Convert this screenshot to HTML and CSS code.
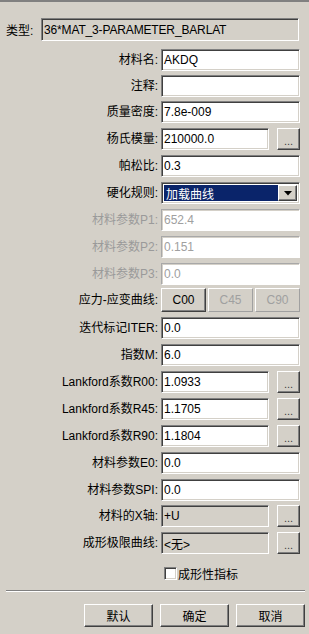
FILE: index.html
```html
<!DOCTYPE html>
<html lang="zh">
<head>
<meta charset="utf-8">
<title>材料属性</title>
<link rel="stylesheet" href="styles.css">
</head>
<body>
<div class="dialog">
  <div class="top-rule"></div>

  <div class="type-row">
    <span class="type-label">类型:</span>
    <div class="field field--readonly">36*MAT_3-PARAMETER_BARLAT</div>
  </div>

  <div class="form">
    <div class="row"><span class="label">材料名:</span><div class="field">AKDQ</div></div>
    <div class="row row--tight"><span class="label">注释:</span><div class="field"></div></div>
    <div class="row row--tight"><span class="label">质量密度:</span><div class="field">7.8e-009</div></div>
    <div class="row"><span class="label">杨氏模量:</span>
      <div class="with-btn"><div class="field">210000.0</div><div class="btn btn--dots">...</div></div>
    </div>
    <div class="row"><span class="label">帕松比:</span><div class="field">0.3</div></div>
    <div class="row"><span class="label">硬化规则:</span>
      <div class="field combo"><div class="combo-value">加载曲线</div><div class="btn combo-arrow"><svg width="8" height="5" viewBox="0 0 8 5"><path d="M0 0H8L4 4.5Z" fill="#000"/></svg></div></div>
    </div>
    <div class="row row--disabled"><span class="label">材料参数P1:</span><div class="field field--disabled">652.4</div></div>
    <div class="row row--disabled"><span class="label">材料参数P2:</span><div class="field field--disabled">0.151</div></div>
    <div class="row row--disabled"><span class="label">材料参数P3:</span><div class="field field--disabled">0.0</div></div>
    <div class="row row--tall"><span class="label">应力-应变曲线:</span>
      <div class="curve-btns">
        <div class="btn btn--curve">C00</div>
        <div class="btn btn--curve btn--disabled">C45</div>
        <div class="btn btn--curve btn--disabled">C90</div>
      </div>
    </div>
    <div class="row"><span class="label">迭代标记ITER:</span><div class="field">0.0</div></div>
    <div class="row"><span class="label">指数M:</span><div class="field">6.0</div></div>
    <div class="row"><span class="label">Lankford系数R00:</span>
      <div class="with-btn"><div class="field">1.0933</div><div class="btn btn--dots">...</div></div>
    </div>
    <div class="row"><span class="label">Lankford系数R45:</span>
      <div class="with-btn"><div class="field">1.1705</div><div class="btn btn--dots">...</div></div>
    </div>
    <div class="row"><span class="label">Lankford系数R90:</span>
      <div class="with-btn"><div class="field">1.1804</div><div class="btn btn--dots">...</div></div>
    </div>
    <div class="row"><span class="label">材料参数E0:</span><div class="field">0.0</div></div>
    <div class="row"><span class="label">材料参数SPI:</span><div class="field">0.0</div></div>
    <div class="row row--tight"><span class="label">材料的X轴:</span>
      <div class="with-btn"><div class="field field--readonly">+U</div><div class="btn btn--dots">...</div></div>
    </div>
    <div class="row"><span class="label">成形极限曲线:</span>
      <div class="with-btn"><div class="field field--readonly">&lt;无&gt;</div><div class="btn btn--dots">...</div></div>
    </div>
  </div>

  <div class="check-row">
    <span class="checkbox"></span><span class="check-label">成形性指标</span>
  </div>

  <div class="separator"></div>

  <div class="actions">
    <div class="btn btn--action">默认</div>
    <div class="btn btn--action">确定</div>
    <div class="btn btn--action">取消</div>
  </div>
</div>
</body>
</html>
```

FILE: styles.css
```css
* { box-sizing: border-box; }

html, body {
  margin: 0;
  padding: 0;
  background: #d4d0c8;
}

body {
  font-family: "Liberation Sans", "Noto Sans CJK SC", sans-serif;
  font-size: 12px;
  color: #000;
}

.dialog {
  width: 309px;
  height: 634px;
  display: flex;
  flex-direction: column;
}

.top-rule {
  height: 2px;
  background: #808080;
}

.type-row {
  display: flex;
  align-items: center;
  margin-top: 16px;
  padding: 0 10px 0 6px;
}

.type-label {
  width: 35px;
  flex: none;
}

.type-row .field {
  flex: 1;
  height: 23px;
  letter-spacing: -0.15px;
}

.form {
  display: flex;
  flex-direction: column;
  gap: 5px;
  margin-top: 8px;
  padding-right: 9px;
}

.row {
  display: grid;
  grid-template-columns: 158px 1fr;
  column-gap: 3px;
  align-items: center;
  height: 22px;
}

.row--tall {
  height: 24px;
  margin-top: -2px;
}

.row--tight {
  margin-top: -1px;
}

.label {
  text-align: right;
  white-space: nowrap;
  line-height: 16px;
}

.row--disabled .label {
  color: #9a9a9a;
}

.field {
  height: 22px;
  background: #fff;
  border: 1px solid;
  border-color: #808080 #fff #fff #808080;
  box-shadow: inset 1px 1px #404040, inset -1px -1px #d4d0c8;
  padding: 0 2px 0 2px;
  display: flex;
  align-items: center;
  white-space: nowrap;
  overflow: hidden;
}

.field--readonly {
  background: #d4d0c8;
}

.field--disabled {
  color: #a0a0a0;
  border-color: #a8a8a8 #fff #fff #a8a8a8;
  box-shadow: inset 1px 1px #d4d0c8;
}

.with-btn {
  display: flex;
  align-items: center;
  gap: 8px;
}

.with-btn .field {
  flex: 1;
  min-width: 0;
}

.btn {
  background: #d4d0c8;
  border: 1px solid;
  border-color: #fff #404040 #404040 #fff;
  box-shadow: inset -1px -1px #808080;
  display: flex;
  align-items: center;
  justify-content: center;
}

.btn--dots {
  width: 23px;
  height: 22px;
  flex: none;
  color: #404040;
  font-size: 11px;
  padding-top: 3px;
}

.combo {
  padding: 2px;
  gap: 0;
  align-items: stretch;
}

.combo-value {
  flex: 1;
  background: #0a246a;
  color: #fff;
  display: flex;
  align-items: center;
  padding-left: 2px;
}

.combo-arrow {
  width: 19px;
  flex: none;
  padding-top: 1px;
}

.curve-btns {
  display: flex;
  gap: 2px;
  height: 24px;
}

.btn--curve {
  width: 45px;
  height: 24px;
  font-size: 12px;
}

.btn--disabled {
  color: #a0a0a0;
  border-color: #fff #a0a0a0 #a0a0a0 #fff;
  box-shadow: none;
}

.check-row {
  display: flex;
  align-items: center;
  margin-top: 12px;
  padding-left: 164px;
  height: 14px;
}

.checkbox {
  width: 13px;
  height: 13px;
  background: #fff;
  border: 1px solid;
  border-color: #808080 #fff #fff #808080;
  box-shadow: inset 1px 1px #404040, inset -1px -1px #d4d0c8;
  flex: none;
}

.check-label {
  margin-left: 1px;
}

.separator {
  margin: 10px 4px 0 6px;
  height: 2px;
  border-top: 1px solid #808080;
  border-bottom: 1px solid #fff;
}

.actions {
  display: flex;
  justify-content: flex-end;
  gap: 7px;
  margin-top: 12px;
  padding-right: 4px;
}

.btn--action {
  width: 69px;
  height: 23px;
}
```
